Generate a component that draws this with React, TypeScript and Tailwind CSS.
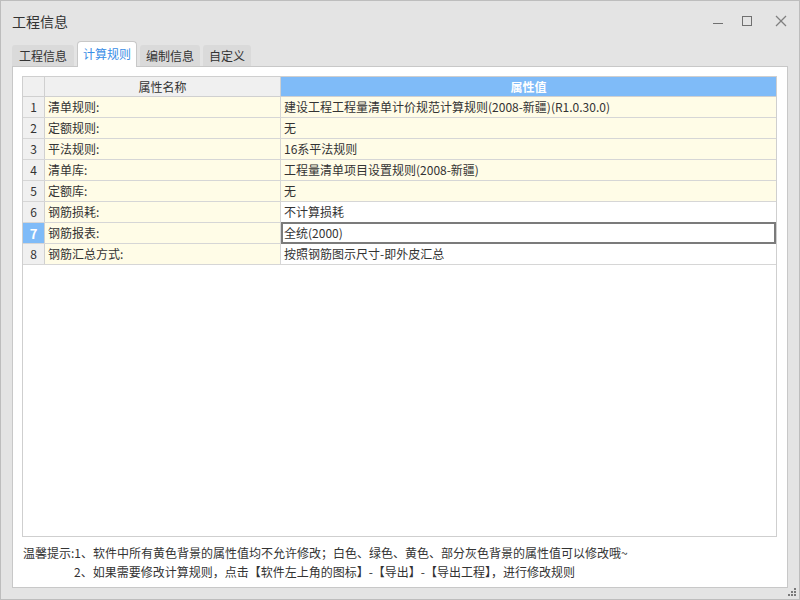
import React from "react";

const rows: { n: number; name: string; value: string; yellowValue: boolean }[] = [
  { n: 1, name: "清单规则:", value: "建设工程工程量清单计价规范计算规则(2008-新疆)(R1.0.30.0)", yellowValue: true },
  { n: 2, name: "定额规则:", value: "无", yellowValue: true },
  { n: 3, name: "平法规则:", value: "16系平法规则", yellowValue: true },
  { n: 4, name: "清单库:", value: "工程量清单项目设置规则(2008-新疆)", yellowValue: true },
  { n: 5, name: "定额库:", value: "无", yellowValue: true },
  { n: 6, name: "钢筋损耗:", value: "不计算损耗", yellowValue: false },
  { n: 7, name: "钢筋报表:", value: "全统(2000)", yellowValue: false },
  { n: 8, name: "钢筋汇总方式:", value: "按照钢筋图示尺寸-即外皮汇总", yellowValue: false },
];

export default function App() {
  return (
    <div
      className="w-[800px] h-[600px] bg-[#e4e4e4] border border-[#bdbdbd] flex flex-col text-[#333] relative"
      style={{ fontFamily: '"Noto Sans CJK SC", "Noto Sans", sans-serif' }}
    >
      {/* title bar */}
      <div className="h-[39px] flex items-center pl-[11px] pr-[12px]">
        <div className="text-[14px] leading-none text-[#333]">工程信息</div>
        <div className="ml-auto flex items-center gap-[18px]">
          <svg width="12" height="12" viewBox="0 0 12 12" className="mt-[1px]">
            <line x1="1" y1="8.5" x2="11" y2="8.5" stroke="#707070" strokeWidth="1" />
          </svg>
          <svg width="12" height="12" viewBox="0 0 12 12" className="ml-[-1px]">
            <rect x="1.5" y="1.5" width="9" height="9" fill="none" stroke="#707070" strokeWidth="1" />
          </svg>
          <svg width="12" height="12" viewBox="0 0 12 12" className="ml-[4px]">
            <line x1="1" y1="1" x2="11" y2="11" stroke="#808080" strokeWidth="1.2" />
            <line x1="11" y1="1" x2="1" y2="11" stroke="#808080" strokeWidth="1.2" />
          </svg>
        </div>
      </div>

      {/* tabs */}
      <div className="h-[26px] flex items-end pl-[11px] text-[12px] relative z-10">
        <div className="h-[21px] px-[7px] flex items-center bg-[#dadada] rounded-t-[3px] leading-none">工程信息</div>
        <div className="h-[26px] px-[5px] ml-[3px] flex items-center bg-white border border-b-0 border-[#c8c8c8] rounded-t-[4px] text-[#3a8ee6] mb-[-1px] pb-[1px] leading-none">计算规则</div>
        <div className="h-[21px] px-[6px] flex items-center bg-[#dadada] rounded-t-[3px] ml-[3px] leading-none">编制信息</div>
        <div className="h-[21px] px-[6px] flex items-center bg-[#dadada] rounded-t-[3px] ml-[3px] leading-none">自定义</div>
      </div>

      {/* panel */}
      <div className="flex-1 mx-[11px] mb-[11px] border border-[#c8c8c8] bg-white flex flex-col pt-[9px] pl-[9px] pr-[10px]">
        <div className="flex-1 border border-[#cfcfcf] flex flex-col text-[12px]">
          {/* header */}
          <div className="h-[20px] flex border-b border-[#d0d0d0]">
            <div className="w-[22px] bg-[#f0f0f0] border-r border-[#d0d0d0]" />
            <div className="w-[236px] bg-[#f0f0f0] border-r border-[#d0d0d0] flex items-center justify-center leading-none">属性名称</div>
            <div className="flex-1 bg-[#7fbbf8] flex items-center justify-center text-white font-bold leading-none">属性值</div>
          </div>
          {rows.map((r) => {
            const sel = r.n === 7;
            return (
              <div key={r.n} className="h-[21px] flex border-b border-[#d6d6d6]">
                <div
                  className={
                    sel
                      ? "w-[22px] bg-[#7fbbf8] text-white font-bold border-r border-[#d0d0d0] flex items-center justify-center leading-none text-[13px]"
                      : "w-[22px] bg-[#f0f0f0] border-r border-[#d0d0d0] flex items-center justify-center leading-none"
                  }
                >
                  {r.n}
                </div>
                <div className="w-[236px] bg-[#fffce7] border-r border-[#d6d6d6] flex items-center pl-[3px] leading-none">{r.name}</div>
                {sel ? (
                  <div className="flex-1 bg-white border-2 border-[#7b7b7b] mt-[-1px] mb-[-1px] flex items-center pl-[1px] leading-none">{r.value}</div>
                ) : (
                  <div className={(r.yellowValue ? "bg-[#fffce7] " : "bg-white ") + "flex-1 flex items-center pl-[3px] leading-none"}>{r.value}</div>
                )}
              </div>
            );
          })}
          <div className="flex-1" />
        </div>
        <div className="h-[50px] flex flex-col pt-[6px] text-[12px] leading-[19px] text-[#333]">
          <div className="ml-[1px]">温馨提示:1、软件中所有黄色背景的属性值均不允许修改；白色、绿色、黄色、部分灰色背景的属性值可以修改哦~</div>
          <div className="ml-[52px]">2、如果需要修改计算规则，点击【软件左上角的图标】-【导出】-【导出工程】，进行修改规则</div>
        </div>
      </div>

      {/* resize grip */}
      <svg width="10" height="10" viewBox="0 0 10 10" className="absolute right-[2px] bottom-[2px]">
        <rect x="7" y="1" width="2" height="2" fill="#7a7a7a" />
        <rect x="4" y="4" width="2" height="2" fill="#7a7a7a" />
        <rect x="7" y="4" width="2" height="2" fill="#7a7a7a" />
        <rect x="1" y="7" width="2" height="2" fill="#7a7a7a" />
        <rect x="4" y="7" width="2" height="2" fill="#7a7a7a" />
        <rect x="7" y="7" width="2" height="2" fill="#7a7a7a" />
      </svg>
    </div>
  );
}
